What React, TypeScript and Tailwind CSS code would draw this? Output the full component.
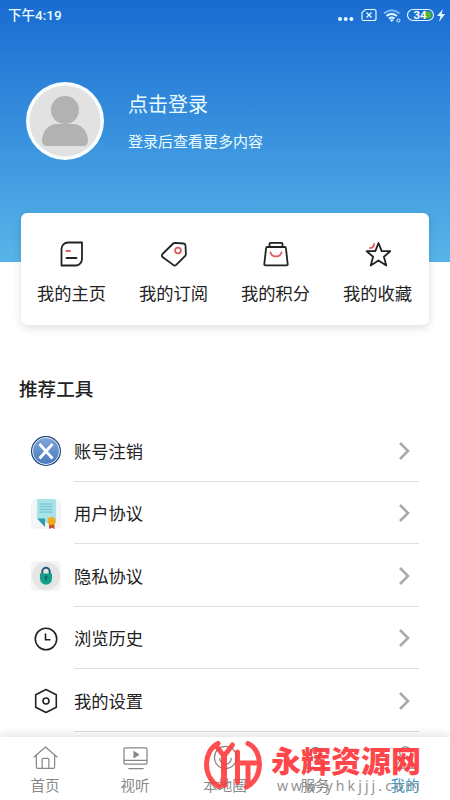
import type { ReactNode } from "react";

const shortcuts: { label: string; icon: ReactNode }[] = [
  {
    label: "我的主页",
    icon: (
      <>
        <path d="M9 1.500h14v16.500a6.500 6.500 0 0 1-6.500 6.500H2.500V8a6.500 6.500 0 0 1 6.500-6.500Z" />
        <path d="M7.500 10h3.500" stroke="#e05a5f" />
        <path d="M7.500 17h10" />
      </>
    ),
  },
  {
    label: "我的订阅",
    icon: (
      <>
        <path d="M14 1.800 22.500 2.500q1.800.2 2 2l.4 8.600q0 1-.7 1.800l-9 9q-1.500 1.400-3 0L1.500 16q-1.400-1.500 0-3L12.200 2.500q.8-.7 1.800-.7Z" />
        <circle cx="17" cy="9.500" r="2.900" stroke="#e05a5f" />
      </>
    ),
  },
  {
    label: "我的积分",
    icon: (
      <>
        <path d="M6.500 6V2.800q0-1 1-1h11q1 0 1 1V6M4.200 6h17.600q1 0 1.100 1l1.800 16q.1 1.400-1 1.400H2.300q-1.100 0-1-1.400L3.100 7q.1-1 1.100-1Z" />
        <path d="M7.500 11.500a5.800 5.800 0 0 0 11 0" stroke="#e05a5f" />
      </>
    ),
  },
  {
    label: "我的收藏",
    icon: (
      <>
        <path d="m13.500 2 3.200 8.200h8.600l-6.400 5.600 2.400 8.700-7.800-5-7.800 5 2.400-8.700-6.400-5.600h8.600Z" />
        <path d="M5 7q4 0 4-4" stroke="#e05a5f" />
      </>
    ),
  },
];

const tools: { label: string; icon: ReactNode }[] = [
  {
    label: "账号注销",
    icon: (
      <>
        <defs>
          <linearGradient id="cancel" x2="0" y2="1">
            <stop stopColor="#7fa5d8" />
            <stop offset="1" stopColor="#477bc0" />
          </linearGradient>
        </defs>
        <circle cx="15" cy="15" r="15" fill="#183f70" />
        <circle cx="15" cy="15" r="13.500" fill="url(#cancel)" stroke="#e6effa" strokeWidth="1" />
        <path d="m8.500 8 13 14.500M21.500 8 8.500 22.500" stroke="white" strokeWidth="2.800" />
      </>
    ),
  },
  {
    label: "用户协议",
    icon: (
      <>
        <rect width="30" height="30" rx="5" fill="#f3f4f5" />
        <path d="M7 0h16q2 0 2 2v22H14l-8-5V2q0-2 1-2Z" fill="#a9e3e6" />
        <path d="M8.500 5h13M8.500 7.700h13M8.500 10.400h13M8.500 13.100h13" stroke="#68bfd0" strokeWidth="1" />
        <path d="M6 19.500h8V28Z" fill="#299eae" />
        <path d="M18 24h5.500v6l-2.700-1.300L18 30Z" fill="#c95135" />
        <circle cx="20.500" cy="22" r="4" fill="#f0ad20" />
      </>
    ),
  },
  {
    label: "隐私协议",
    icon: (
      <>
        <rect width="30" height="30" rx="5" fill="#f4f4f4" />
        <circle cx="15" cy="15" r="14" fill="#e5e5e6" />
        <path d="M11.300 13v-2.500a3.700 3.700 0 0 1 7.400 0V13" fill="none" stroke="#215b7b" strokeWidth="2" />
        <path d="M9 12.500h12v5.200a6 6 0 0 1-12 0Z" fill="#139f87" />
        <path d="M15 15.500v4" stroke="#175f70" strokeWidth="1.500" />
        <circle cx="15" cy="16" r="1.400" fill="#175f70" />
      </>
    ),
  },
  {
    label: "浏览历史",
    icon: (
      <g fill="none" stroke="#222" strokeWidth="1.600">
        <circle cx="15" cy="15" r="10.700" />
        <path d="M14.500 9.500v6.300h5" />
      </g>
    ),
  },
  {
    label: "我的设置",
    icon: (
      <g fill="none" stroke="#222" strokeWidth="1.600" strokeLinejoin="round">
        <path d="m15 3.500 10.300 5.300v12.400L15 26.500 4.700 21.200V8.800Z" />
        <circle cx="15" cy="15" r="3" />
      </g>
    ),
  },
];

const tabs: { label: string; icon: ReactNode; active?: boolean }[] = [
  {
    label: "首页",
    icon: <path d="m1 12.500 12-10.500 12 10.500M3.500 10.500v12q0 1.800 1.500 1.800h16q1.500 0 1.500-1.800v-12M9.500 24v-9q0-1 1-1h5q1 0 1 1v9" />,
  },
  {
    label: "视听",
    icon: (
      <>
        <rect x="1" y="3" width="24" height="17" rx="1.500" />
        <path d="M1.500 16h23M6 24.500h15" />
        <path d="m11.500 7 4.500 3-4.500 3Z" fill="#888" />
      </>
    ),
  },
  {
    label: "本地圈",
    icon: (
      <>
        <circle cx="13" cy="13" r="11.500" />
        <path d="M7 14a6 6 0 0 0 12 0" />
      </>
    ),
  },
  {
    label: "服务",
    icon: (
      <>
        <circle cx="13" cy="8" r="5.500" />
        <path d="M3 24 9 13M23 24l-6-11M3 24h20" />
      </>
    ),
  },
  {
    label: "我的",
    active: true,
    icon: (
      <>
        <circle cx="13" cy="8" r="6" />
        <path d="m9 13-7 11h22l-7-11" />
      </>
    ),
  },
];

function StatusBar() {
  return (
    <div className="flex h-[30px] items-center justify-between pl-2 pr-1">
      <span className="pt-0.5 text-[13.500px] font-medium leading-none">下午4:19</span>
      <svg width="114" height="20" viewBox="0 0 114 20" fill="none" stroke="#e4fbff">
        <g fill="#e4fbff" stroke="none">
          <circle cx="8" cy="14" r="2" />
          <circle cx="13.700" cy="14" r="2" />
          <circle cx="19.400" cy="14" r="2" />
        </g>
        <path d="M33.500 4.500H42q2 0 2 2v7q0 2-2 2H31.500q-1.500 0-1.500-1.500V7.500Z" strokeWidth="1.200" />
        <path d="m34.500 7.500 5 5m0-5-5 5" strokeWidth="1.300" />
        <path d="M52 8.500q7.500-6.500 15.500 0" stroke="#80b9ef" strokeWidth="2" />
        <path d="M54.500 11q5-4 10.500 0M57 13.500q2.700-2 5.500 0" strokeWidth="2" />
        <path d="m57.500 14.500 2.300 2.500 2.300-2.500Z" fill="#e4fbff" stroke="none" />
        <circle cx="66.500" cy="15.500" r="1.500" strokeWidth="1" />
        <path d="M92 6.500h4a3.500 3.500 0 0 1 0 7h-4Z" fill="#55b52b" stroke="none" />
        <rect x="75.500" y="4.500" width="26" height="11" rx="5.500" strokeWidth="1.200" />
        <text x="81.500" y="14.200" fill="#fff" stroke="none" fontSize="11.500" fontWeight="700" fontFamily="Roboto">
          34
        </text>
        <path d="m111 4-6 7h3.500l-1.500 6 6-8h-3.500Z" fill="#e4fbff" stroke="none" />
      </svg>
    </div>
  );
}

function Watermark() {
  return (
    <div className="pointer-events-none absolute left-[203px] top-[738px] z-10 flex opacity-90">
      <svg width="60" height="54" viewBox="0 0 60 54" fill="none" stroke="#ff3b3d" strokeWidth="5" strokeLinecap="round" strokeLinejoin="round">
        <path d="M15 5.500C0 13-1 39 16 48.500M45 5.500C61 13 60 41 43.500 49" />
        <path d="m14 9 7 9L29.500 7" />
        <path d="M21 18v29" strokeWidth="6" />
        <path d="M34.500 14v30M34.500 25H53M45 25v22" />
      </svg>
      <div className="w-[165px] pl-2 pt-1.5">
        <div className="whitespace-nowrap text-[30px] font-black leading-[36px] text-[#ff3337]">永辉资源网</div>
        <div className="pl-1.5 font-['Noto_Sans',sans-serif] text-[14px] leading-[11px] tracking-[3.100px] text-[#888]">
          www.yhkjjj.com
        </div>
      </div>
    </div>
  );
}

export default function App() {
  return (
    <div className="relative flex h-[800px] w-[450px] flex-col overflow-hidden bg-white font-['Roboto','Noto_Sans_CJK_SC',sans-serif] text-[#222]">
      <header className="h-[262px] shrink-0 bg-linear-to-b from-[#196bd1] to-[#58b4e8] text-[#e9fcff]">
        <StatusBar />
        <div className="flex items-center pl-[26px] pt-[52px]">
          <svg width="78" height="78" viewBox="0 0 78 78">
            <circle cx="39" cy="39" r="39" fill="#f8feff" />
            <circle cx="39" cy="39" r="35.500" fill="#e2e2e2" />
            <circle cx="39" cy="28" r="14" fill="#b2b2b2" />
            <path d="M16 59c0-10 7-17 15-17h16c8 0 15 7 15 17q0 5-5 5H21q-5 0-5-5Z" fill="#b2b2b2" />
          </svg>
          <div className="pl-6 pt-1.5">
            <div className="text-[20px] leading-[30px]">点击登录</div>
            <div className="pt-[11px] pb-[5px] text-[15px] leading-[22px]">登录后查看更多内容</div>
          </div>
        </div>
      </header>

      <section className="relative mx-[21px] -mt-[49px] grid h-[112px] shrink-0 grid-cols-4 rounded-md bg-white shadow-[0_3px_9px_rgba(0,0,0,0.13)]">
        {shortcuts.map((s) => (
          <button key={s.label} className="flex flex-col items-center pt-7 pr-px">
            <svg width="26" height="26" viewBox="0 0 26 26" fill="none" stroke="#222" strokeWidth="1.800" strokeLinecap="round" strokeLinejoin="round">
              {s.icon}
            </svg>
            <span className="mt-3.5 text-[17.300px] leading-[26px]">{s.label}</span>
          </button>
        ))}
      </section>

      <h2 className="mt-[51px] shrink-0 pl-[19px] text-[18.600px] font-medium leading-[28px]">推荐工具</h2>
      <ul className="mt-[15px] min-h-0 flex-1 overflow-hidden pl-[31px] pr-[31px]">
        {tools.map((t) => (
          <li key={t.label} className="flex h-[62.500px] items-center">
            <svg width="30" height="30" viewBox="0 0 30 30" className="mt-0.5 shrink-0">
              {t.icon}
            </svg>
            <div className="ml-[13px] flex h-full flex-1 items-center justify-between border-b border-[#dedede] pt-0.5 pr-2">
              <span className="pt-0.5 text-[17.300px] leading-[26px]">{t.label}</span>
              <svg width="14" height="20" viewBox="0 0 14 20" fill="none" stroke="#aaa" strokeWidth="2.600">
                <path d="m3 2 8 8-8 8" />
              </svg>
            </div>
          </li>
        ))}
      </ul>

      <nav className="grid h-[63px] shrink-0 grid-cols-5 bg-white shadow-[0_-2px_9px_rgba(0,0,0,0.12)]">
        {tabs.map((t) => (
          <button key={t.label} className={`flex flex-col items-center pt-2 ${t.active ? "text-[#3f99c9]" : "text-[#888]"}`}>
            <svg width="25" height="25" viewBox="0 0 26 26" fill="none" stroke="#888" strokeWidth="1.300" strokeLinejoin="round" strokeLinecap="round">
              {t.icon}
            </svg>
            <span className="mt-1.5 text-[14.500px] leading-[22px]">{t.label}</span>
          </button>
        ))}
      </nav>
      <Watermark />
    </div>
  );
}
